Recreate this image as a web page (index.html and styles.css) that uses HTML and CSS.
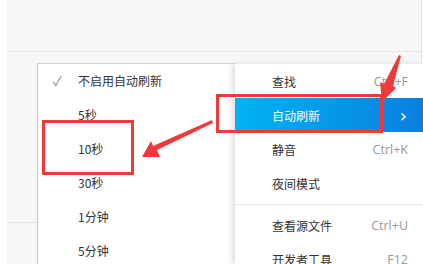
FILE: index.html
```html
<!DOCTYPE html>
<html lang="zh-CN">
<head>
  <meta charset="UTF-8" />
  <title>自动刷新</title>
  <link rel="stylesheet" href="styles.css">
</head>
<body>
  <div class="window">
    <div class="toolbar"></div>
    <div class="page">
      <div class="page-row"></div>
    </div>
  </div>

  <div class="menus">
    <ul class="submenu">
      <li class="item checked"><span class="check">✓</span>不启用自动刷新</li>
      <li class="item">5秒</li>
      <li class="item">10秒</li>
      <li class="item">30秒</li>
      <li class="item">1分钟</li>
      <li class="item">5分钟</li>
    </ul>
    <ul class="mainmenu">
      <li class="item"><span>查找</span><span class="key">Ctrl+F</span></li>
      <li class="item active"><span>自动刷新</span><span class="arrow">›</span></li>
      <li class="item"><span>静音</span><span class="key">Ctrl+K</span></li>
      <li class="item"><span>夜间模式</span></li>
      <li class="sep"></li>
      <li class="item"><span>查看源文件</span><span class="key">Ctrl+U</span></li>
      <li class="item"><span>开发者工具</span><span class="key">F12</span></li>
    </ul>
  </div>

  <svg class="marks" width="423" height="264" viewBox="0 0 423 264">
    <rect x="43.5" y="121.5" width="89" height="52" fill="none" stroke="#f0393b" stroke-width="3" />
    <rect x="217.5" y="95.5" width="164" height="36" fill="none" stroke="#f0393b" stroke-width="3" />
    <polygon points="212,120 213,123 157,150 160,157 142,157 151,141 153,146" fill="#f0393b" />
    <polygon points="399,55 401,56 393,86 396,88 382,102 380,82 384,84" fill="#f0393b" />
  </svg>
</body>
</html>
```

FILE: styles.css
```css
body {
  margin: 0;
  width: 423px;
  height: 264px;
  overflow: hidden;
  background: #fff;
  font-family: "Noto Sans CJK SC", "Noto Sans", sans-serif;
  font-size: 12px;
  color: #333;
}
.window {
  margin-left: 7px;
  width: 414px;
  height: 264px;
  background: #f7f7f7;
  border-right: 1px solid #e2e2e2;
}
.toolbar {
  height: 51px;
  border-bottom: 1px solid #e6e6e6;
}
.page-row {
  height: 170px;
  border-bottom: 1px solid #e6e6e6;
}
.menus {
  position: absolute;
  left: 37px;
  top: 64px;
  display: flex;
}
ul {
  list-style: none;
  margin: 0;
  padding: 0;
  background: #fff;
  height: 200px;
}
.submenu {
  width: 197px;
  border-left: 1px solid #c6c6c6;
  border-top: 1px solid #d2d2d2;
  margin-top: -1px;
}
.submenu .item {
  height: 34px;
  line-height: 34px;
  padding-left: 40px;
  position: relative;
}
.check {
  position: absolute;
  left: 15px;
  top: 0;
  color: #8a8a8a;
  font-size: 13px;
}
.mainmenu {
  width: 188px;
  box-shadow: -3px 0 5px rgba(0, 0, 0, 0.12);
}
.mainmenu .item {
  height: 34px;
  display: flex;
  align-items: center;
  justify-content: space-between;
  padding: 0 15px 0 37px;
}
.mainmenu .active {
  background: linear-gradient(90deg, #00b3f4, #0a7fde);
  color: #fff;
}
.key {
  color: #9a9a9a;
  font-family: "Open Sans", "Noto Sans", sans-serif;
  font-size: 12.5px;
}
.arrow {
  font-size: 18px;
  margin-right: 1px;
  font-family: "DejaVu Sans", sans-serif;
}
.sep {
  height: 4px;
  margin-bottom: 3px;
  border-bottom: 1px solid #e4e4e4;
}
.marks {
  position: absolute;
  left: 0;
  top: 0;
}
```
